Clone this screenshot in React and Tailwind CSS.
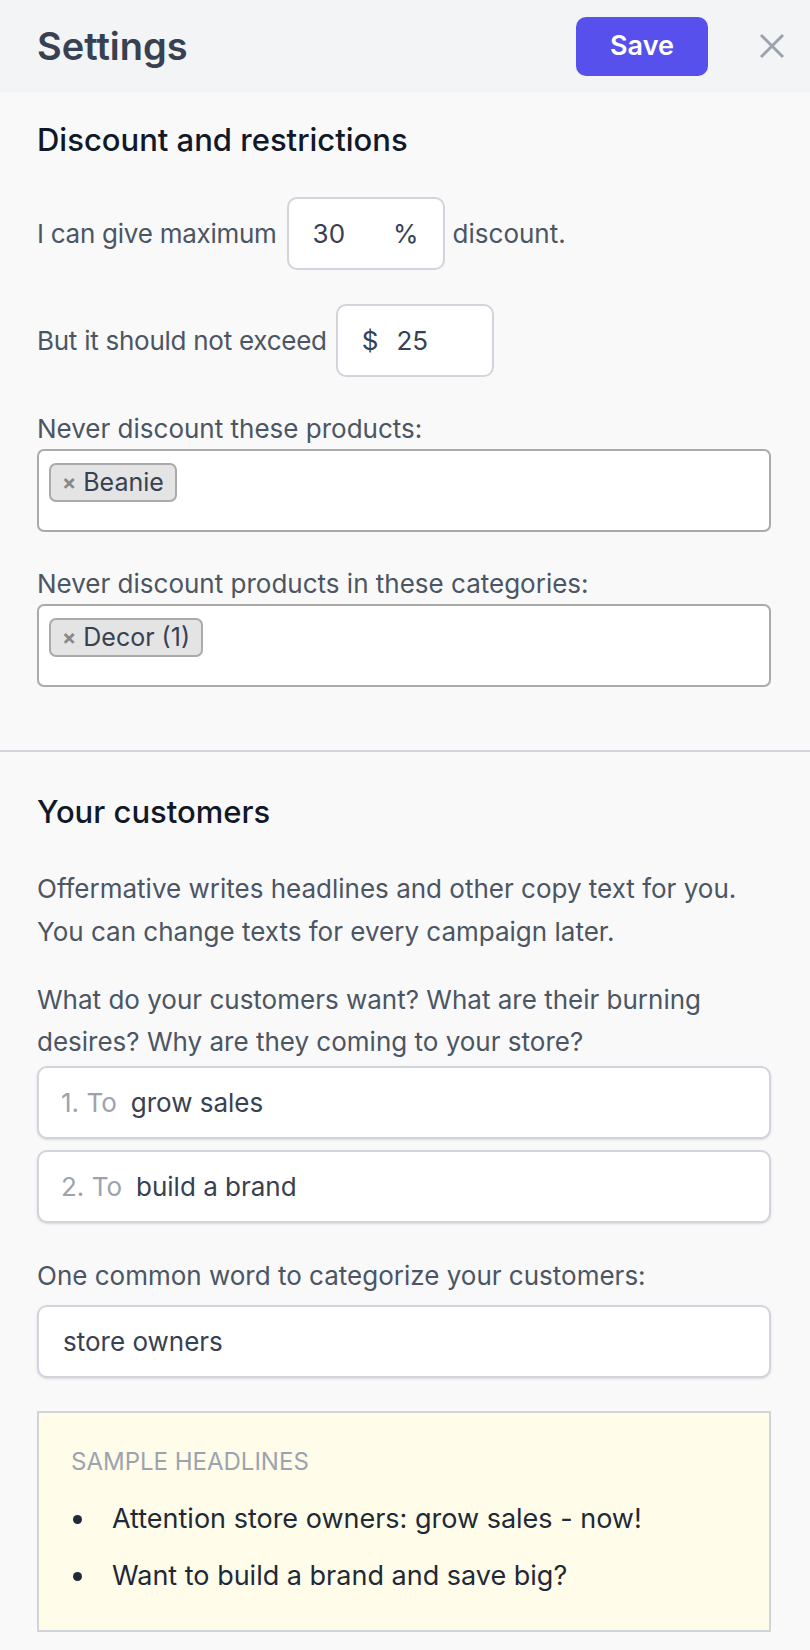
const Chip = ({ label }) => (
  <span className="inline-flex items-center h-[39px] pl-[11px] pr-[11px] gap-[7px] rounded-[7px] border-[2px] border-[#aaaaaa] bg-[#e4e4e4] text-[25px] text-[#374151]">
    <span className="text-[21px] font-bold text-[#888888] leading-none">×</span>
    <span className="leading-none">{label}</span>
  </span>
);

const TagBox = ({ label }) => (
  <div className="h-[83px] rounded-[7px] border-[2px] border-[#aaaaaa] bg-white pl-[10px] pt-[12px]">
    <Chip label={label} />
  </div>
);

const GoalInput = ({ prefix, value }) => (
  <div className="flex items-center h-[73px] rounded-[10px] border-[2px] border-[#d1d5db] bg-white shadow-sm px-[22px] text-[26px]">
    <span className="text-[#9ca3af] mr-[14px]">{prefix}</span>
    <span className="text-[#374151]">{value}</span>
  </div>
);

const App = () => {
  return (
    <div className="min-h-[1650px] bg-[#f9f9f9] font-['Inter',sans-serif]">
      <header className="h-[92px] bg-[#f3f4f6] flex items-center pl-[37px] pr-[25px]">
        <h1 className="text-[38px] font-semibold text-[#374151]">Settings</h1>
        <button className="ml-auto w-[132px] h-[59px] rounded-[10px] bg-[#5850ec] text-white text-[27px] font-semibold">
          Save
        </button>
        <svg className="ml-[51px] w-[26px] h-[26px]" viewBox="0 0 26 26" fill="none" stroke="#9ca3af" strokeWidth="3">
          <path d="M2 2 L24 24 M24 2 L2 24" />
        </svg>
      </header>

      <section className="pl-[37px] pr-[39px] pt-[28px] pb-[63px]">
        <h2 className="text-[31px] leading-[40px] font-medium text-[#111827]">Discount and restrictions</h2>

        <div className="mt-[37px] flex items-center text-[26px] text-[#4b5563]">
          <span className="tracking-[-0.01em]">I can give maximum</span>
          <div className="ml-[10px] mr-[8px] w-[158px] h-[73px] flex items-center justify-between px-[24px] rounded-[10px] border-[2px] border-[#d1d5db] bg-white text-[#374151]">
            <span>30</span>
            <span>%</span>
          </div>
          <span>discount.</span>
        </div>

        <div className="mt-[34px] flex items-center text-[26px] text-[#4b5563]">
          <span className="tracking-[-0.01em]">But it should not exceed</span>
          <div className="ml-[9px] w-[158px] h-[73px] flex items-center px-[24px] gap-[18px] rounded-[10px] border-[2px] border-[#d1d5db] bg-white text-[#374151]">
            <span>$</span>
            <span>25</span>
          </div>
        </div>

        <p className="mt-[32px] text-[26px] leading-[40px] text-[#4b5563]">Never discount these products:</p>
        <TagBox label="Beanie" />

        <p className="mt-[32px] text-[26px] leading-[40px] text-[#4b5563]">Never discount products in these categories:</p>
        <TagBox label="Decor (1)" />
      </section>

      <div className="h-[2px] bg-[#d1d5db]" />

      <section className="pl-[37px] pr-[39px] pt-[40px] pb-[20px]">
        <h2 className="text-[31px] leading-[40px] font-medium text-[#111827]">Your customers</h2>

        <p className="mt-[35px] text-[26px] leading-[43px] text-[#4b5563]">
          Offermative writes headlines and other copy text for you.
          <br />
          You can change texts for every campaign later.
        </p>

        <p className="mt-[26px] text-[26px] leading-[42px] text-[#4b5563]">
          What do your customers want? What are their burning
          <br />
          desires? Why are they coming to your store?
        </p>

        <div className="mt-[3px] flex flex-col gap-[11px]">
          <GoalInput prefix="1. To" value="grow sales" />
          <GoalInput prefix="2. To" value="build a brand" />
        </div>

        <p className="mt-[32px] text-[26px] leading-[42px] text-[#4b5563]">One common word to categorize your customers:</p>
        <div className="mt-[8px] flex items-center h-[73px] rounded-[10px] border-[2px] border-[#d1d5db] bg-white shadow-sm px-[24px] text-[26px] text-[#374151]">
          store owners
        </div>

        <div className="mt-[33px] border-[2px] border-[#d1d5db] bg-[#fffde9] pl-[32px] pr-[20px] pt-[34px] pb-[33px]">
          <p className="text-[24px] leading-[30px] uppercase text-[#9ca3af]">Sample headlines</p>
          <ul className="mt-[21px] flex flex-col gap-[15px] text-[27px] leading-[42px] text-[#1f2937]">
            <li className="flex items-center">
              <span className="w-[9px] h-[9px] rounded-full bg-[#1f2937] ml-[2px] mr-[30px]" />
              Attention store owners: grow sales - now!
            </li>
            <li className="flex items-center">
              <span className="w-[9px] h-[9px] rounded-full bg-[#1f2937] ml-[2px] mr-[30px]" />
              Want to build a brand and save big?
            </li>
          </ul>
        </div>
      </section>
    </div>
  );
};

export default App;
